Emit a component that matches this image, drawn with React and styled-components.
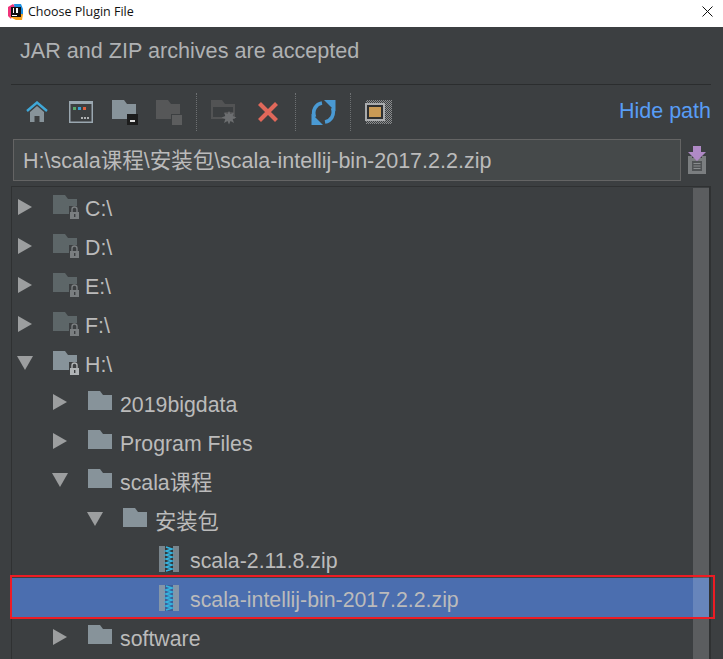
import React from "react";
import styled, { createGlobalStyle } from "styled-components";

const GlobalStyle = createGlobalStyle`
  html, body {
    margin: 0;
    height: 100%;
    overflow: hidden;
    background: #3c3f41;
  }
`;

const Window = styled.div`
  width: 723px;
  height: 659px;
  display: flex;
  flex-direction: column;
  overflow: hidden;
  background: #3c3f41;
  font-family: "Liberation Sans", "Noto Sans CJK SC", sans-serif;
`;

const TitleBar = styled.div`
  height: 27px;
  flex: none;
  box-sizing: border-box;
  display: flex;
  align-items: center;
  padding: 0 10px 4px 8px;
  background: #fff;
  color: #111;
`;

const TitleText = styled.span`
  flex: 1;
  margin-left: 5px;
  font-family: "Open Sans", sans-serif;
  font-size: 12.5px;
`;

const Content = styled.div`
  flex: 1;
  min-height: 0;
  display: flex;
  flex-direction: column;
  padding: 0 12px 0 11px;
`;

const Hint = styled.div`
  height: 58px;
  flex: none;
  box-sizing: border-box;
  padding: 12px 0 0 9px;
  font-size: 21.6px;
  line-height: 24px;
  color: #afb1b3;
  border-bottom: 1px solid #2b2d2e;
`;

const Toolbar = styled.div`
  height: 54px;
  flex: none;
  display: flex;
  align-items: center;
  padding-left: 4px;
`;

const ToolButton = styled.div`
  width: 44px;
  height: 28px;
  flex: none;
  display: flex;
  align-items: center;
  justify-content: center;
`;

const ToolSeparator = styled.div`
  width: 11px;
  height: 38px;
  flex: none;
  box-sizing: border-box;
  border-left: 1px dotted #6d7072;
  margin-left: 5px;
  margin-right: -5px;
`;

const HidePath = styled.span`
  margin-left: auto;
  padding-bottom: 2px;
  font-size: 21.5px;
  color: #589df6;
`;

const PathRow = styled.div`
  flex: none;
  display: flex;
  align-items: center;
  gap: 6px;
  padding-left: 2px;
`;

const PathField = styled.div`
  width: 668px;
  height: 42px;
  box-sizing: border-box;
  display: flex;
  align-items: center;
  padding: 0 0 3px 9px;
  border: 1px solid #646464;
  background: #45494a;
  color: #bbbbbb;
  font-size: 21.5px;
  white-space: nowrap;
`;

const Tree = styled.div`
  flex: 1;
  min-height: 0;
  position: relative;
  margin-top: 5px;
  border: solid #2f3132;
  border-width: 1px 2px 0 1px;
`;

const Row = styled.div`
  height: 39.1px;
  display: flex;
  align-items: center;
  position: relative;
  padding-left: ${(p) => 5 + p.$level * 35}px;
  background: ${(p) => (p.$selected ? "#4b6eaf" : "transparent")};

  ${(p) =>
    p.$selected &&
    `
    &::after {
      content: "";
      position: absolute;
      z-index: 2;
      left: -2px;
      right: -6px;
      top: -3px;
      bottom: -2px;
      border: 2px solid #ed1c24;
      pointer-events: none;
    }
  `}
`;

const ArrowSlot = styled.div`
  width: 36px;
  flex: none;
  display: flex;
  align-items: center;
`;

const IconSlot = styled.div`
  width: 32px;
  height: 26px;
  flex: none;
  display: flex;
  align-items: center;
  padding-top: 2px;
  padding-left: ${(p) => (p.$zip ? 1 : 0)}px;
  box-sizing: border-box;
`;

const RowLabel = styled.span`
  font-size: 21.3px;
  line-height: 24px;
  padding-top: 5px;
  color: #bbbbbb;
  white-space: nowrap;
`;

const ScrollThumb = styled.div`
  position: absolute;
  z-index: 1;
  top: 1px;
  bottom: 0;
  right: 0;
  width: 16px;
  background: rgba(255, 255, 255, 0.16);
`;

function AppLogo() {
  return (
    <svg width="15" height="16" viewBox="0 0 15 16">
      <path d="M0 3 L5 0 L8 3 L3 15 L0 12 Z" fill="#f0347a" />
      <path d="M6 0 H13 L15 5 V11 H8 Z" fill="#1e8fe0" />
      <path d="M2 13 L8 16 H14 L15 10 H4 Z" fill="#f6a21e" />
      <rect x="3" y="3" width="10" height="10" fill="#111" />
      <rect x="4" y="11" width="5" height="1" fill="#fff" />
      <rect x="5" y="4" width="1" height="5" fill="#fff" />
      <rect x="8" y="4" width="2" height="5" fill="#fff" />
    </svg>
  );
}

function CloseIcon() {
  return (
    <svg width="11" height="11" viewBox="0 0 11 11">
      <path d="M0.5 0.5 L10.5 10.5 M10.5 0.5 L0.5 10.5" stroke="#111" strokeWidth="1" fill="none" />
    </svg>
  );
}

function HomeIcon() {
  return (
    <svg width="22" height="22" viewBox="0 0 22 22">
      <path d="M1 10 L11 1.5 L21 10" stroke="#3fa8d8" strokeWidth="2.4" fill="none" />
      <path d="M4 11 L11 5 L18 11 V21 H13.5 V15 H8.5 V21 H4 Z" fill="#87939a" />
    </svg>
  );
}

function TerminalIcon() {
  return (
    <svg width="24" height="22" viewBox="0 0 24 22">
      <rect x="0" y="0" width="24" height="22" fill="#9aa7b0" />
      <rect x="1.5" y="3" width="21" height="17.5" fill="#3c3f41" />
      <rect x="4" y="6" width="3" height="3" fill="#59a869" />
      <rect x="9" y="6" width="3" height="3" fill="#389fd6" />
      <rect x="14" y="6" width="3" height="3" fill="#e05f3c" />
      <rect x="12" y="16" width="2" height="2" fill="#afb1b3" />
      <rect x="15" y="16" width="2" height="2" fill="#afb1b3" />
      <rect x="18" y="16" width="2" height="2" fill="#afb1b3" />
    </svg>
  );
}

const folderPath = "M0 0 H12 L15 4 H24 V19 H0 Z";

function DesktopFolderIcon() {
  return (
    <svg width="26" height="25" viewBox="0 0 26 25">
      <path d={folderPath} fill="#87939a" />
      <rect x="15" y="14" width="11" height="11" fill="#1c1c1c" />
      <rect x="18" y="20" width="5" height="2" fill="#dddddd" />
    </svg>
  );
}

function GrayFolderIcon() {
  return (
    <svg width="26" height="25" viewBox="0 0 26 25">
      <path d={folderPath} fill="#565758" />
      <rect x="15" y="14" width="11" height="11" fill="#3c3f41" />
      <rect x="16" y="15" width="10" height="10" fill="#5c5d5e" />
    </svg>
  );
}

function NewFolderIcon() {
  return (
    <svg width="26" height="25" viewBox="0 0 26 25">
      <path d="M0 0 H11 L14 4 H24 V19 H0 Z M2 7 V17 H14 V12 H22 V7 Z" fill="#525354" fillRule="evenodd" />
      <path
        d="M18 11 L19.5 14 L23 12.5 L21.7 16 L25.5 17.5 L21.7 19 L23 23 L19.5 21 L18 24.5 L16.5 21 L13 23 L14.3 19 L10.5 17.5 L14.3 16 L13 12.5 L16.5 14 Z"
        fill="#6c6e70"
      />
    </svg>
  );
}

function DeleteIcon() {
  return (
    <svg width="22" height="22" viewBox="0 0 22 22">
      <path d="M2.5 2.5 L19.5 19.5 M19.5 2.5 L2.5 19.5" stroke="#e0685a" strokeWidth="4.2" fill="none" />
    </svg>
  );
}

function RefreshIcon() {
  return (
    <svg width="25" height="25" viewBox="0 0 25 25">
      <path d="M3.5 17 C1 10 5 4 11 3" stroke="#4a9ad4" strokeWidth="3.6" fill="none" />
      <path d="M21.5 8 C24 15 20 21 14 22" stroke="#4a9ad4" strokeWidth="3.6" fill="none" />
      <path d="M13 0 H24.5 V11.5 Z" fill="#4a9ad4" />
      <path d="M12 25 H0.5 V13.5 Z" fill="#4a9ad4" />
    </svg>
  );
}

function PreviewIcon() {
  return (
    <svg width="27" height="24" viewBox="0 0 27 24">
      <defs>
        <pattern id="checker" width="2" height="2" patternUnits="userSpaceOnUse">
          <rect width="1" height="1" fill="#8b8d8f" />
          <rect x="1" y="1" width="1" height="1" fill="#8b8d8f" />
        </pattern>
      </defs>
      <rect x="1" y="0" width="26" height="24" fill="url(#checker)" />
      <rect x="0" y="3" width="20" height="18" fill="#a9abad" />
      <rect x="2" y="5" width="16" height="14" fill="#2e2f30" />
      <rect x="4" y="7" width="12" height="10" fill="#c99a55" />
    </svg>
  );
}

function SaveIcon() {
  return (
    <svg width="20" height="28" viewBox="0 0 20 28">
      <path d="M1 10 H5 V12 H15 V10 H19 V28 H1 Z" fill="#7b7e80" />
      <rect x="5" y="15" width="10" height="10" fill="#505355" />
      <path d="M6.5 17.5 H13.5 M6.5 20 H13.5 M6.5 22.5 H13.5" stroke="#8a8d8f" strokeWidth="1" />
      <path d="M6 0 H14 V6 H19 L10 15 L1 6 H6 Z" fill="#b08ac6" />
    </svg>
  );
}

function Arrow({ open }) {
  return (
    <svg width="16" height="16" viewBox="0 0 16 16">
      {open ? <path d="M0 1 H16 L8 15 Z" fill="#9c9e9f" /> : <path d="M1 0 L15 8 L1 16 Z" fill="#9c9e9f" />}
    </svg>
  );
}

function Folder({ locked, dim }) {
  const body = dim ? "#5d6668" : "#87939a";
  const lock = dim ? "#7a7e80" : "#afb3b5";
  return (
    <svg width="27" height="25" viewBox="0 0 27 25" style={{ overflow: "visible" }}>
      <path d={folderPath} fill={body} />
      {locked && (
        <>
          <rect x="16" y="11" width="10" height="12" fill="#3c3f41" />
          <rect x="17" y="17" width="9" height="7" fill={lock} />
          <path d="M19 17 V14.5 A2.5 2.5 0 0 1 24 14.5 V17" stroke={lock} strokeWidth="1.4" fill="none" />
          <rect x="21" y="19" width="1.4" height="3" fill="#3c3f41" />
        </>
      )}
    </svg>
  );
}

function ZipIcon({ selected }) {
  return (
    <svg width="20" height="26" viewBox="0 0 20 26">
      <rect x="0" y="0" width="20" height="26" fill={selected ? "#8496a8" : "#79858c"} />
      <rect x="6" y="0" width="8" height="26" fill={selected ? "#3f5f96" : "#33383a"} />
      <path
        d="M7 1 L13 3 L7 5 L13 7 L7 9 L13 11 L7 13 L13 15 L7 17 L13 19 L7 21 L13 23 L7 25"
        stroke="#34b4e0"
        strokeWidth="1.6"
        fill="none"
      />
    </svg>
  );
}

const rows = [
  { level: 0, name: "C:\\", kind: "drive", dim: true },
  { level: 0, name: "D:\\", kind: "drive", dim: true },
  { level: 0, name: "E:\\", kind: "drive", dim: true },
  { level: 0, name: "F:\\", kind: "drive", dim: true },
  { level: 0, name: "H:\\", kind: "drive", open: true },
  { level: 1, name: "2019bigdata", kind: "folder" },
  { level: 1, name: "Program Files", kind: "folder" },
  { level: 1, name: "scala课程", kind: "folder", open: true },
  { level: 2, name: "安装包", kind: "folder", open: true },
  { level: 3, name: "scala-2.11.8.zip", kind: "zip" },
  { level: 3, name: "scala-intellij-bin-2017.2.2.zip", kind: "zip", selected: true },
  { level: 1, name: "software", kind: "folder" },
];

export default function App() {
  return (
    <Window>
      <GlobalStyle />
      <TitleBar>
        <AppLogo />
        <TitleText>Choose Plugin File</TitleText>
        <CloseIcon />
      </TitleBar>
      <Content>
        <Hint>JAR and ZIP archives are accepted</Hint>
        <Toolbar>
          <ToolButton><HomeIcon /></ToolButton>
          <ToolButton><TerminalIcon /></ToolButton>
          <ToolButton><DesktopFolderIcon /></ToolButton>
          <ToolButton><GrayFolderIcon /></ToolButton>
          <ToolSeparator />
          <ToolButton><NewFolderIcon /></ToolButton>
          <ToolButton><DeleteIcon /></ToolButton>
          <ToolSeparator />
          <ToolButton><RefreshIcon /></ToolButton>
          <ToolSeparator />
          <ToolButton><PreviewIcon /></ToolButton>
          <HidePath>Hide path</HidePath>
        </Toolbar>
        <PathRow>
          <PathField>H:\scala课程\安装包\scala-intellij-bin-2017.2.2.zip</PathField>
          <SaveIcon />
        </PathRow>
        <Tree>
          {rows.map((row) => (
            <Row key={row.name} $level={row.level} $selected={row.selected}>
              <ArrowSlot>{row.kind !== "zip" && <Arrow open={row.open} />}</ArrowSlot>
              <IconSlot $zip={row.kind === "zip"}>
                {row.kind === "zip" ? (
                  <ZipIcon selected={row.selected} />
                ) : (
                  <Folder locked={row.kind === "drive"} dim={row.dim} />
                )}
              </IconSlot>
              <RowLabel>{row.name}</RowLabel>
            </Row>
          ))}
          <ScrollThumb />
        </Tree>
      </Content>
    </Window>
  );
}
